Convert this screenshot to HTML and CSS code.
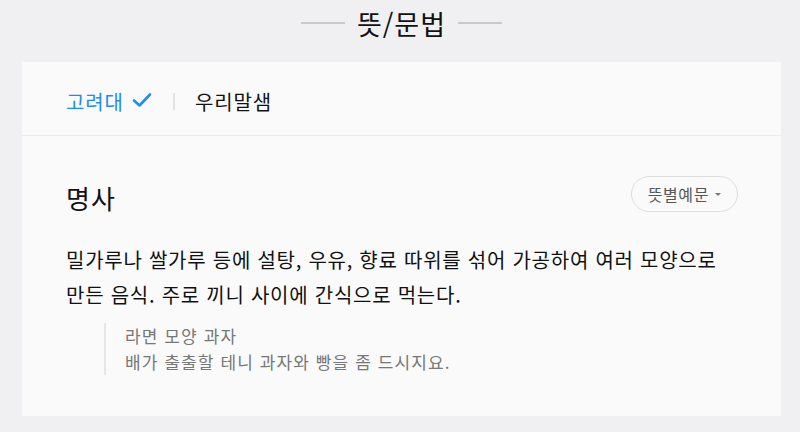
FILE: index.html
```html
<!DOCTYPE html>
<html lang="ko">
<head>
<meta charset="utf-8">
<link rel="stylesheet" href="styles.css">
</head>
<body>
<div class="page">
  <h2 class="section-title"><span class="rule"></span><span class="title-text">뜻/문법</span><span class="rule"></span></h2>
  <div class="card">
    <div class="tabs">
      <span class="tab active">고려대<svg class="check" width="20" height="16" viewBox="0 0 20 16"><path d="M2 8.5 L7.5 13.5 L18 2.5" fill="none" stroke="#1e8cf5" stroke-width="2.6" stroke-linecap="round" stroke-linejoin="round"/></svg></span>
      <span class="tab-sep"></span>
      <span class="tab">우리말샘</span>
    </div>
    <div class="content">
      <div class="pos-row">
        <span class="pos">명사</span>
        <button class="filter">뜻별예문<span class="caret"></span></button>
      </div>
      <p class="definition">밀가루나 쌀가루 등에 설탕, 우유, 향료 따위를 섞어 가공하여 여러 모양으로 만든 음식. 주로 끼니 사이에 간식으로 먹는다.</p>
      <div class="examples">
        <p>라면 모양 과자</p>
        <p>배가 출출할 테니 과자와 빵을 좀 드시지요.</p>
      </div>
    </div>
  </div>
</div>
</body>
</html>
```

FILE: styles.css
```css
* { box-sizing: border-box; }
html, body { margin: 0; padding: 0; }
body {
  background: #f0f0f2;
  font-family: "Noto Sans CJK KR", "Noto Sans", sans-serif;
  color: #111;
  word-break: keep-all;
}
.page {
  padding: 0 19px 0 22px;
}
.section-title {
  margin: 0;
  height: 62px;
  display: flex;
  align-items: center;
  justify-content: center;
  gap: 12px;
  font-size: 27px;
  letter-spacing: 1px;
  font-weight: 400;
  padding-bottom: 16px;
  color: #111;
}
.title-text { line-height: 1; }
.rule {
  width: 44px;
  height: 2px;
  background: #c9c9cc;
}
.card {
  background: #fafafa;
  height: 354px;
}
.tabs {
  height: 74px;
  display: flex;
  align-items: center;
  padding: 6px 0 0 44px;
  border-bottom: 1px solid #ebebeb;
  font-size: 20px;
  letter-spacing: 0.9px;
}
.tab {
  display: flex;
  align-items: center;
  color: #111;
}
.tab.active { color: #1e8cf5; }
.check { margin-left: 8px; margin-top: -4px; }
.tab-sep {
  width: 2px;
  height: 17px;
  background: #e3e3e3;
  margin: 0 20px 0 21px;
}
.content {
  padding: 0 43px 0 44px;
}
.pos-row {
  display: flex;
  justify-content: space-between;
  align-items: center;
  height: 50px;
  margin-top: 36px;
}
.pos {
  font-size: 26px;
  letter-spacing: 1px;
  font-weight: 400;
}
.filter {
  font-family: inherit;
  font-size: 16px;
  letter-spacing: 0.6px;
  color: #555;
  background: #fafafa;
  border: 1px solid #dedede;
  border-radius: 18px;
  height: 36px;
  padding: 0 16px 0 16px;
  display: flex;
  align-items: center;
  gap: 6px;
  margin-top: -6px;
}
.caret {
  width: 0;
  height: 0;
  border-left: 3px solid transparent;
  border-right: 3px solid transparent;
  border-top: 3px solid #777;
}
.definition {
  margin: 20px 0 0 0;
  font-size: 20px;
  letter-spacing: 0.75px;
  line-height: 35px;
  color: #111;
}
.examples {
  margin: 11px 0 0 38px;
  border-left: 2px solid #e6e6e6;
  padding-left: 19px;
  font-size: 17px;
  letter-spacing: 1.1px;
  line-height: 26px;
  color: #777;
}
.examples p { margin: 0; }
```
